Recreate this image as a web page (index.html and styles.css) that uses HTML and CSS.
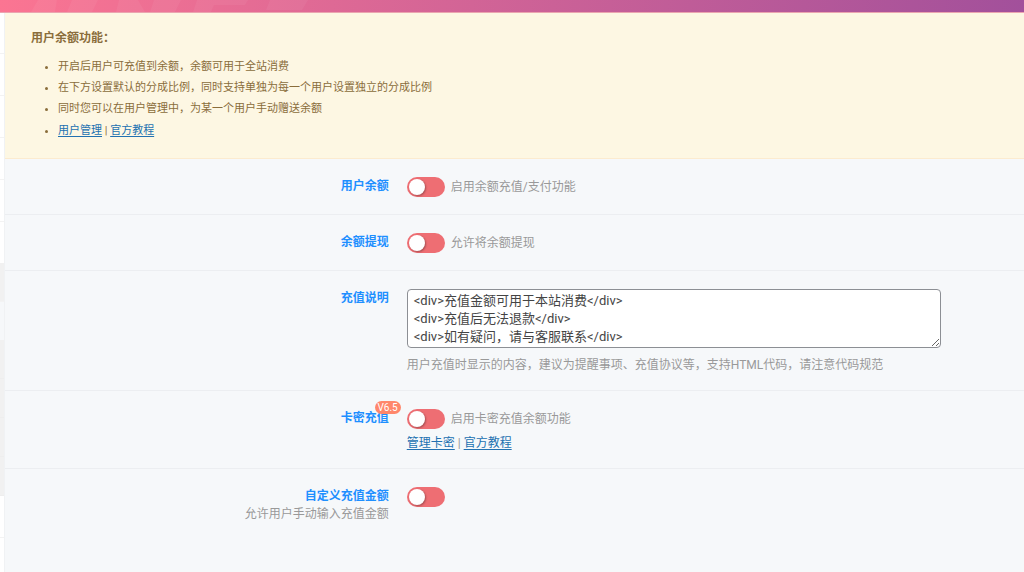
FILE: index.html
```html
<!DOCTYPE html>
<html lang="zh-CN">
<head>
    <meta charset="UTF-8">
    <meta name="viewport" content="width=device-width, initial-scale=1.0">
    <title>用户余额</title>
    <link rel="stylesheet" href="styles.css">
</head>
<body>
    <!-- Top gradient bar with faint shapes -->
    <header class="top_bar">
        <svg class="top_shapes" width="310" height="12" viewBox="0 0 310 12" aria-hidden="true">
            <path d="M38 0H57L55 12H31ZM72 0H98L92 12H67ZM119 0H138L145 12H116ZM154 0H181L175 12H150ZM197 0H248L245 5H214L211 12H193ZM270 0H308L302 10H266Z"/>
        </svg>
    </header>

    <div class="wrapper">
        <!-- Edge of the side menu -->
        <nav class="side_nav" aria-label="菜单">
            <div class="nav_item first"></div>
            <div class="nav_item"></div>
            <div class="nav_item"></div>
            <div class="nav_item"></div>
            <div class="nav_item"></div>
            <div class="nav_item last"></div>
            <div class="nav_item active"></div>
            <div class="nav_space"></div>
            <div class="nav_item sub"></div>
            <div class="nav_item sub"></div>
            <div class="nav_item sub"></div>
            <div class="nav_item sub"></div>
            <div class="nav_item"></div>
            <div class="nav_item last"></div>
        </nav>

        <main class="content">
            <!-- Notice box -->
            <section class="notice">
                <h1 class="notice_title">用户余额功能：</h1>
                <ul class="notice_list">
                    <li>开启后用户可充值到余额，余额可用于全站消费</li>
                    <li>在下方设置默认的分成比例，同时支持单独为每一个用户设置独立的分成比例</li>
                    <li>同时您可以在用户管理中，为某一个用户手动赠送余额</li>
                    <li class="notice_links"><a href="#">用户管理</a> | <a href="#">官方教程</a></li>
                </ul>
            </section>

            <!-- Settings form -->
            <form>
                <div class="field">
                    <div class="field_title"><label for="balance">用户余额</label></div>
                    <div class="field_body">
                        <div class="switch_line">
                            <input type="checkbox" class="switch" id="balance">
                            <span class="hint">启用余额充值/支付功能</span>
                        </div>
                    </div>
                </div>

                <div class="field">
                    <div class="field_title"><label for="withdraw">余额提现</label></div>
                    <div class="field_body">
                        <div class="switch_line">
                            <input type="checkbox" class="switch" id="withdraw">
                            <span class="hint">允许将余额提现</span>
                        </div>
                    </div>
                </div>

                <div class="field">
                    <div class="field_title"><label for="desc">充值说明</label></div>
                    <div class="field_body">
                        <textarea id="desc" class="text_box" rows="3" spellcheck="false">&lt;div&gt;充值金额可用于本站消费&lt;/div&gt;
&lt;div&gt;充值后无法退款&lt;/div&gt;
&lt;div&gt;如有疑问，请与客服联系&lt;/div&gt;</textarea>
                        <p class="hint below">用户充值时显示的内容，建议为提醒事项、充值协议等，支持HTML代码，请注意代码规范</p>
                    </div>
                </div>

                <div class="field">
                    <div class="field_title">
                        <label for="card">卡密充值</label>
                        <span class="badge">V6.5</span>
                    </div>
                    <div class="field_body">
                        <div class="switch_line">
                            <input type="checkbox" class="switch" id="card">
                            <span class="hint">启用卡密充值余额功能</span>
                        </div>
                        <p class="links"><a href="#">管理卡密</a> | <a href="#">官方教程</a></p>
                    </div>
                </div>

                <div class="field">
                    <div class="field_title">
                        <label for="custom">自定义充值金额</label>
                        <p class="hint">允许用户手动输入充值金额</p>
                    </div>
                    <div class="field_body">
                        <div class="switch_line">
                            <input type="checkbox" class="switch" id="custom">
                        </div>
                    </div>
                </div>
            </form>
        </main>
    </div>
</body>
</html>
```

FILE: styles.css
```css
* {
    box-sizing: border-box;
}
body {
    margin: 0;
    min-height: 100vh;
    display: flex;
    flex-direction: column;
    font-family: Roboto, "Noto Sans CJK SC", sans-serif;
    font-size: 12px;
    line-height: 18px;
    color: #999;
    background-color: #f6f8fa;
}
p {
    margin: 0;
}
a {
    color: #2271b1;
    text-underline-offset: 2px;
}
/* Top bar */
.top_bar {
    height: 13px;
    background: linear-gradient(100deg, #fb7592, #a2509b);
    border-bottom: 1px solid #eba5b0;
}
.top_shapes {
    display: block;
    fill: rgba(255, 255, 255, 0.05);
}
/* Side menu and content next to each other */
.wrapper {
    display: flex;
    flex: 1;
}
.side_nav {
    width: 5px;
    flex: none;
    border-right: 1px solid #f0f2f4;
}
.nav_item {
    height: 42px;
    background-color: #fff;
    border-bottom: 1px solid #f3f3f3;
}
.nav_item.first {
    height: 41px;
}
.nav_item.last {
    height: 41px;
    border-bottom: none;
}
.nav_item.active {
    height: 39px;
    background-color: #f1f1f1;
}
.nav_item.sub {
    height: 39px;
    background-color: #f1f1f1;
    border-bottom-color: #eee;
}
.nav_space {
    height: 38px;
}
.content {
    flex: 1;
    min-width: 0;
}
/* Notice box */
.notice {
    padding: 16px 26px 15px;
    color: #8a6d3b;
    background-color: #fdf7e3;
    border-bottom: 1px solid #fcebcf;
}
.notice_title {
    margin: 0 0 9px;
    font-size: 12px;
    font-weight: 700;
    line-height: 18px;
}
.notice_list {
    margin: 0;
    padding-left: 27px;
    font-size: 11px;
    line-height: 21px;
}
.notice_links {
    line-height: 24px;
}
/* One row of the form */
.field {
    display: flex;
    gap: 18px;
    padding: 18px 83px 17px 0;
    border-bottom: 1px solid #eceef1;
}
.field:last-child {
    border-bottom: none;
}
.field_title {
    position: relative;
    width: 41%;
    flex: none;
    text-align: right;
}
.field_title label {
    font-weight: 700;
    color: #1e8fff;
}
.field_body {
    flex: 1;
    min-width: 0;
}
.switch_line {
    display: flex;
    align-items: center;
    gap: 6px;
}
.hint {
    color: #999;
}
.below {
    margin-top: 9px;
    line-height: 16px;
}
.links {
    margin-top: 6px;
    line-height: 16px;
}
/* On / off switch */
.switch {
    appearance: none;
    flex: none;
    width: 38px;
    height: 20px;
    margin: 0;
    padding: 2px;
    border-radius: 10px;
    background-color: #ee6e73;
    cursor: pointer;
}
.switch::before {
    content: "";
    display: block;
    width: 16px;
    height: 16px;
    border-radius: 50%;
    background-color: #fff;
    box-shadow: 1px 1px 2px rgba(0, 0, 0, 0.3);
}
.switch:checked {
    background-color: #4caf50;
}
.switch:checked::before {
    margin-left: 18px;
}
.text_box {
    display: block;
    width: 100%;
    padding: 2px 6px 1px;
    border: 1px solid #8c8f94;
    border-radius: 4px;
    font-family: inherit;
    font-size: 13px;
    line-height: 18px;
    color: #444;
    background-color: #fff;
    resize: vertical;
}
/* Version badge over the label */
.badge {
    position: absolute;
    top: -8px;
    right: -12px;
    padding: 0 3px;
    border-radius: 7px;
    font-size: 10px;
    line-height: 13px;
    color: #fff;
    background-color: #ff876b;
}
```
